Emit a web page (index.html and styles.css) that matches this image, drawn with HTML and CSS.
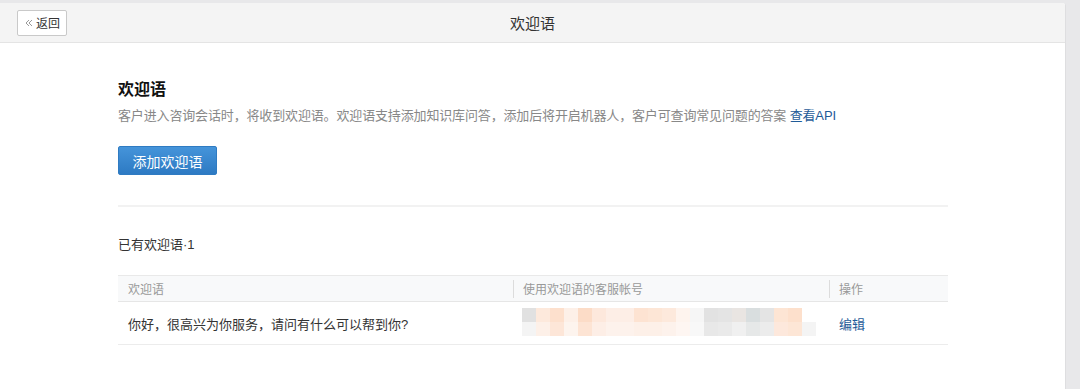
FILE: index.html
```html
<!DOCTYPE html>
<html lang="zh-CN">
<head>
    <meta charset="UTF-8">
    <meta name="viewport" content="width=device-width, initial-scale=1.0">
    <title>欢迎语</title>
    <link rel="stylesheet" href="styles.css">
</head>
<body>
    <div class="page">
        <div class="header">
            <div class="header-left">
                <a href="#" class="back-btn">
                    <svg width="8" height="8" viewBox="0 0 8 8">
                        <path d="M4 1 L1 4 L4 7 M7 1 L4 4 L7 7" fill="none" stroke="#9a9a9a" stroke-width="1"/>
                    </svg>
                    返回
                </a>
            </div>
            <div class="header-title">欢迎语</div>
            <div></div>
        </div>

        <div class="content">
            <h2>欢迎语</h2>
            <p class="desc">客户进入咨询会话时，将收到欢迎语。欢迎语支持添加知识库问答，添加后将开启机器人，客户可查询常见问题的答案 <a href="#">查看API</a></p>
            <button class="add-btn">添加欢迎语</button>

            <div class="divider"></div>

            <div class="count">已有欢迎语·1</div>

            <table class="list">
                <thead>
                    <tr>
                        <th class="col-msg">欢迎语</th>
                        <th class="col-acc"><span class="sep"></span>使用欢迎语的客服帐号</th>
                        <th class="col-op"><span class="sep"></span>操作</th>
                    </tr>
                </thead>
                <tbody>
                    <tr>
                        <td>你好，很高兴为你服务，请问有什么可以帮到你?</td>
                        <td class="acc-cell"><div class="mosaic"></div></td>
                        <td><a href="#">编辑</a></td>
                    </tr>
                </tbody>
            </table>
        </div>
    </div>
</body>
</html>
```

FILE: styles.css
```css
html, body {
    margin: 0;
    padding: 0;
}
body {
    background-color: #e8e8ea;
    padding-top: 3px;
    font-family: "Liberation Sans", "Noto Sans CJK SC", sans-serif;
    color: #333;
}
.page {
    width: 1066px;
    height: 386px;
    background: white;
    border-right: 1px solid #dedee0;
    box-sizing: border-box;
    border-top-right-radius: 3px;
    overflow: hidden;
}
.header {
    height: 40px;
    background-color: #f4f4f4;
    border-bottom: 1px solid #e4e4e4;
    display: grid;
    grid-template-columns: 1fr auto 1fr;
    align-items: center;
    box-sizing: border-box;
}
.header-left {
    padding-left: 17px;
}
.back-btn {
    display: inline-flex;
    align-items: center;
    gap: 3px;
    width: 50px;
    height: 26px;
    box-sizing: border-box;
    padding-left: 7px;
    background: white;
    border: 1px solid #c9c9c9;
    border-radius: 2px;
    font-size: 12px;
    color: #333;
    text-decoration: none;
}
.header-title {
    font-size: 15px;
    color: #333;
}
.content {
    width: 830px;
    margin-left: 118px;
    padding-top: 36px;
}
.content h2 {
    margin: 0;
    font-size: 16px;
    line-height: 22px;
    font-weight: bold;
    color: #111;
}
.desc {
    margin: 5px 0 0;
    font-size: 13px;
    line-height: 20px;
    letter-spacing: -0.15px;
    color: #888;
}
.desc a {
    color: #1f5b98;
    text-decoration: none;
}
.add-btn {
    margin-top: 20px;
    width: 99px;
    height: 29px;
    border: 1px solid #2f7bc2;
    border-radius: 2px;
    background: linear-gradient(#4594da, #2d7ac3);
    color: white;
    font-family: inherit;
    font-size: 14px;
    padding: 0;
}
.divider {
    margin-top: 30px;
    border-top: 2px solid #f2f2f2;
}
.count {
    margin-top: 28px;
    font-size: 13px;
    line-height: 20px;
    color: #333;
}
.list {
    margin-top: 20px;
    width: 100%;
    border-collapse: collapse;
    font-size: 13px;
}
.list th {
    height: 25px;
    padding: 0 10px;
    text-align: left;
    font-weight: normal;
    font-size: 12px;
    color: #999;
    background-color: #f8f9fa;
    border-top: 1px solid #e9e9e9;
    border-bottom: 1px solid #e6e6e6;
    position: relative;
}
.sep {
    position: absolute;
    left: 0;
    top: 4px;
    height: 18px;
    border-left: 1px solid #dcdcdc;
}
.col-msg {
    width: 375px;
}
.col-acc {
    width: 296px;
}
.list td {
    height: 42px;
    padding: 0 10px;
    border-bottom: 1px solid #ececec;
    color: #333;
}
.list td a {
    color: #1f5b98;
    text-decoration: none;
}
.list td.acc-cell {
    padding-left: 9px;
}
.mosaic {
    width: 296px;
    height: 28px;
    margin-top: -2px;
    background:
        linear-gradient(to right,
            #e1e1e1 0 14px, #fde9dc 14px 28px, #fde0cd 28px 42px, #fdf0e8 42px 56px,
            #fcdcc7 56px 70px, #fde8dc 70px 84px, #fdeee6 84px 98px, #fdeee6 98px 112px,
            #fde3d2 112px 126px, #fde6d6 126px 140px, #fde9dc 140px 154px, #fef4ee 154px 168px,
            #f6f6f6 168px 182px, #e2e2e2 182px 196px, #e4e4e4 196px 210px, #e9e5e2 210px 224px,
            #d9dedf 224px 238px, #e4e4e4 238px 252px, #fde5d4 252px 266px, #fde0cc 266px 280px,
            #ffffff 280px 296px) top / 100% 14px no-repeat,
        linear-gradient(to right,
            #f4f4f4 0 14px, #fdf0e8 14px 28px, #fde6d8 28px 42px, #fdf4ee 42px 56px,
            #fde4d4 56px 70px, #fdeee6 70px 84px, #fdf2ec 84px 98px, #fdf2ec 98px 112px,
            #fdf0e8 112px 126px, #fdf0e8 126px 140px, #fdf2ec 140px 154px, #fef6f2 154px 168px,
            #f8f8f8 168px 182px, #e8e8e8 182px 196px, #eaeaea 196px 210px, #f0f0f0 210px 224px,
            #e6e8e8 224px 238px, #ececec 238px 252px, #fde8dc 252px 266px, #fde6d6 266px 280px,
            #f4f4f4 280px 294px, #ffffff 294px 296px) bottom / 100% 14px no-repeat;
}
```
